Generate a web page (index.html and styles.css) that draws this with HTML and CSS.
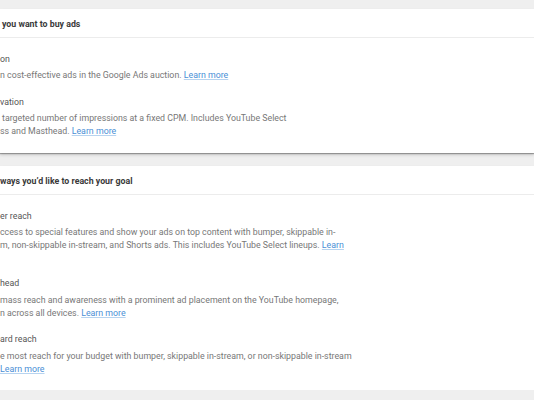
FILE: index.html
```html
<!DOCTYPE html>
<html>
<head>
<meta charset="utf-8">
<link rel="stylesheet" href="styles.css">
</head>
<body>
<div class="page">
  <section class="card">
    <div class="card-head"><span class="off1">you want to buy ads</span></div>
    <div class="card-body">
      <div class="opt">
        <div class="opt-title">on</div>
        <div class="opt-text">n cost-effective ads in the Google Ads auction. <a class="link">Learn more</a></div>
      </div>
      <div class="opt">
        <div class="opt-title">vation</div>
        <div class="opt-text"><span class="off1"> targeted number of impressions at a fixed CPM. Includes YouTube Select</span><br>ss and Masthead. <a class="link">Learn more</a></div>
      </div>
    </div>
  </section>
  <section class="card">
    <div class="card-head">ways you’d like to reach your goal</div>
    <div class="card-body">
      <div class="opt">
        <div class="opt-title">er reach</div>
        <div class="opt-text">ccess to special features and show your ads on top content with bumper, skippable in-<br>m, non-skippable in-stream, and Shorts ads. This includes YouTube Select lineups. <a class="link">Learn</a></div>
      </div>
      <div class="opt gap-l">
        <div class="opt-title">head</div>
        <div class="opt-text">mass reach and awareness with a prominent ad placement on the YouTube homepage,<br>n across all devices. <a class="link">Learn more</a></div>
      </div>
      <div class="opt">
        <div class="opt-title">ard reach</div>
        <div class="opt-text">e most reach for your budget with bumper, skippable in-stream, or non-skippable in-stream<br><a class="link">Learn more</a></div>
      </div>
    </div>
  </section>
</div>
</body>
</html>
```
FILE: styles.css
```css
html, body {
  margin: 0;
  padding: 0;
  background: #efefef;
  font-family: Roboto, "Liberation Sans", Arial, sans-serif;
}
.page {
  padding-top: 9px;
  display: flex;
  flex-direction: column;
  gap: 13.5px;
}
.card {
  background: #fff;
  box-shadow: 0 1px 1px rgba(0,0,0,0.3), 0 2px 3px rgba(0,0,0,0.15);
}
.card-head {
  height: 28px;
  line-height: 30px;
  font-size: 8.8px;
  font-weight: 700;
  color: #3a3a3a;
  border-bottom: 1px solid #ececec;
}
.card-body {
  padding: 14.5px 0 14.5px 0;
  display: flex;
  flex-direction: column;
  gap: 13.5px;
}
.opt-title {
  font-size: 8.8px;
  line-height: 13px;
  color: #555;
  margin-bottom: 3.5px;
}
.opt-text {
  font-size: 8.8px;
  line-height: 13px;
  color: #777;
}
.link {
  color: #4a8fd6;
  text-decoration: underline;
  text-decoration-color: #b7d3ef;
}
.off1 { margin-left: 2px; }
.gap-l { margin-top: 11.5px; }
```
